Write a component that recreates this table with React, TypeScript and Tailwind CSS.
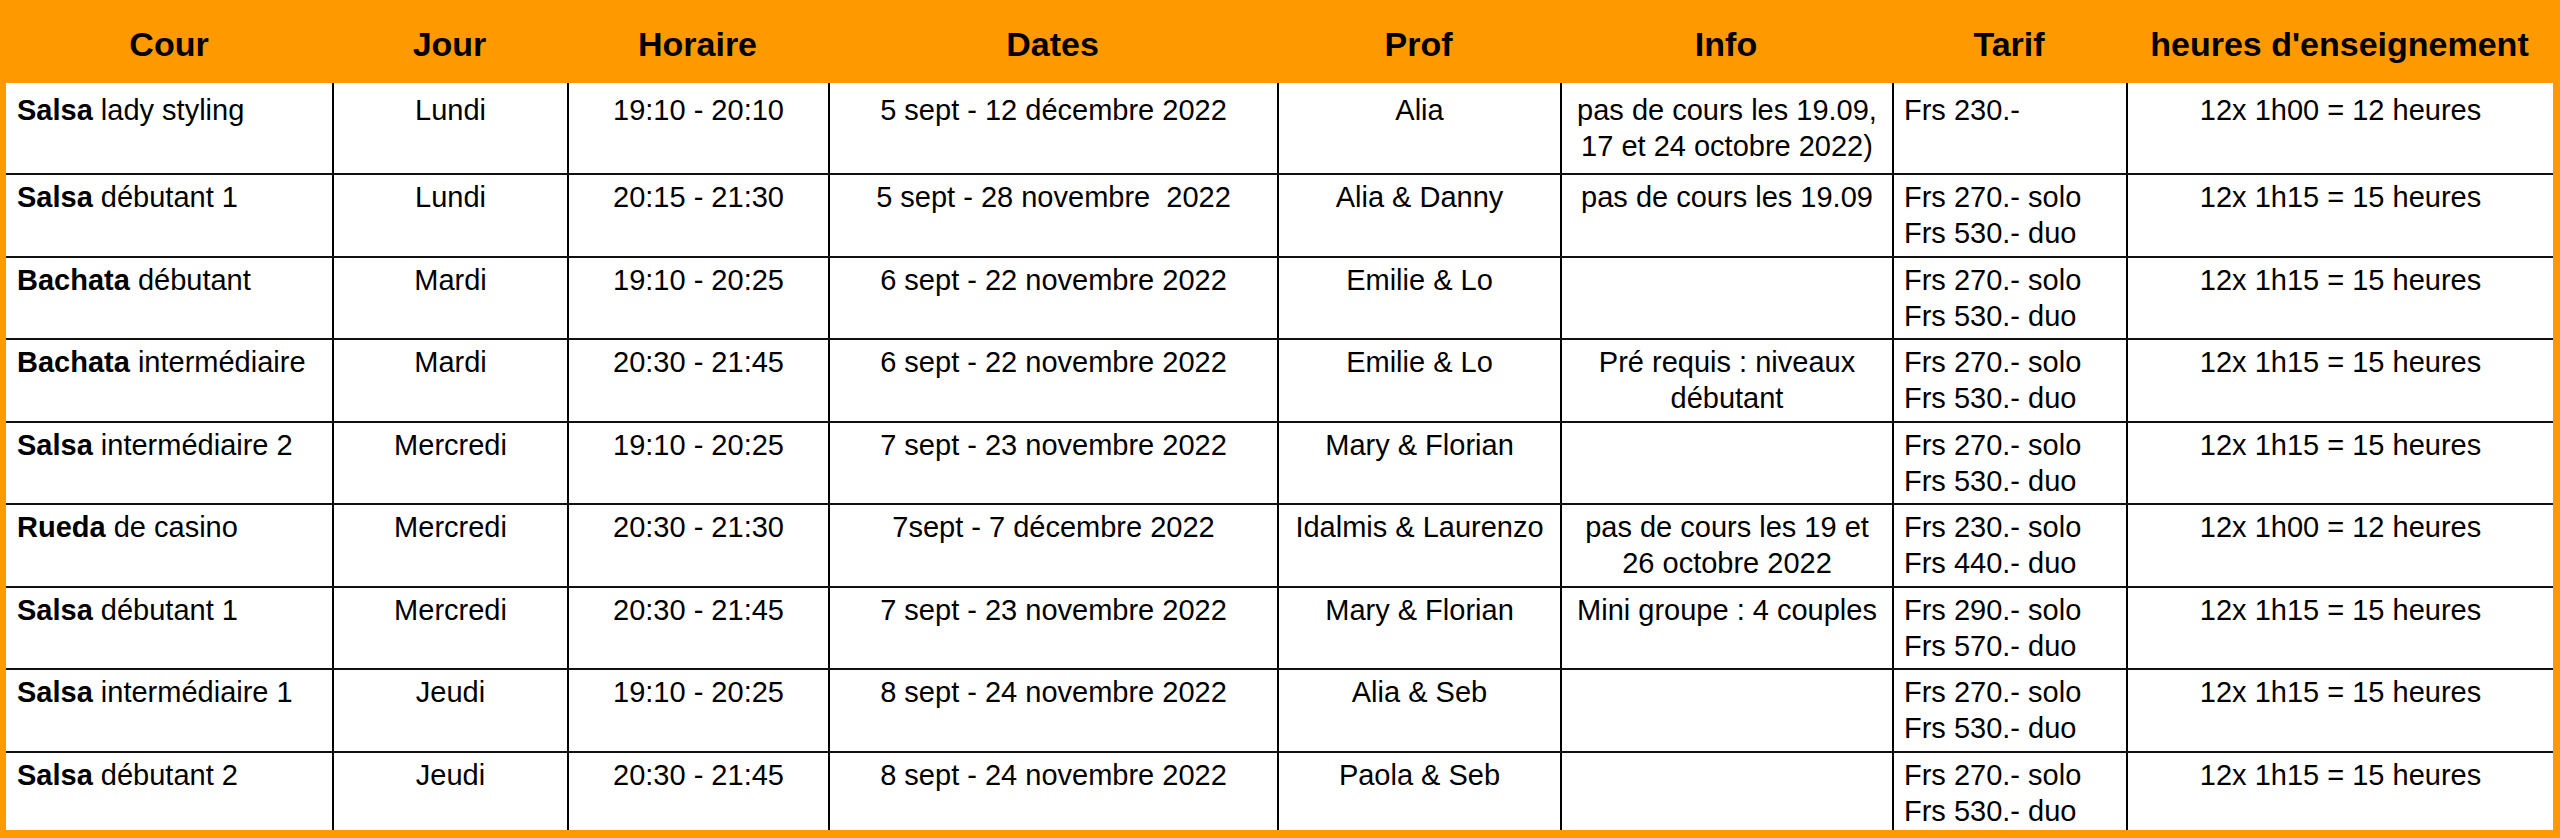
import React from "react";

type Row = {
  style: string;
  rest: string;
  day: string;
  time: string;
  dates: string;
  prof: string;
  info: string[];
  tarif: string[];
  hours: string;
  h: string;
  pt: string;
};

const rows: Row[] = [
  {
    style: "Salsa",
    rest: "lady styling",
    day: "Lundi",
    time: "19:10 - 20:10",
    dates: "5 sept - 12 décembre 2022",
    prof: "Alia",
    info: ["pas de cours les 19.09,", "17 et 24 octobre 2022)"],
    tarif: ["Frs 230.-"],
    hours: "12x 1h00 = 12 heures",
    h: "h-[90px]",
    pt: "pt-[9px]",
  },
  {
    style: "Salsa",
    rest: "débutant 1",
    day: "Lundi",
    time: "20:15 - 21:30",
    dates: "5 sept - 28 novembre\u00a0 2022",
    prof: "Alia & Danny",
    info: ["pas de cours les 19.09"],
    tarif: ["Frs 270.- solo", "Frs 530.- duo"],
    hours: "12x 1h15 = 15 heures",
    h: "h-[83px] border-t-2",
    pt: "pt-[4px]",
  },
  {
    style: "Bachata",
    rest: "débutant",
    day: "Mardi",
    time: "19:10 - 20:25",
    dates: "6 sept - 22 novembre 2022",
    prof: "Emilie & Lo",
    info: [],
    tarif: ["Frs 270.- solo", "Frs 530.- duo"],
    hours: "12x 1h15 = 15 heures",
    h: "h-[82px] border-t-2",
    pt: "pt-[4px]",
  },
  {
    style: "Bachata",
    rest: "intermédiaire",
    day: "Mardi",
    time: "20:30 - 21:45",
    dates: "6 sept - 22 novembre 2022",
    prof: "Emilie & Lo",
    info: ["Pré requis : niveaux", "débutant"],
    tarif: ["Frs 270.- solo", "Frs 530.- duo"],
    hours: "12x 1h15 = 15 heures",
    h: "h-[83px] border-t-2",
    pt: "pt-[4px]",
  },
  {
    style: "Salsa",
    rest: "intermédiaire 2",
    day: "Mercredi",
    time: "19:10 - 20:25",
    dates: "7 sept - 23 novembre 2022",
    prof: "Mary & Florian",
    info: [],
    tarif: ["Frs 270.- solo", "Frs 530.- duo"],
    hours: "12x 1h15 = 15 heures",
    h: "h-[82px] border-t-2",
    pt: "pt-[4px]",
  },
  {
    style: "Rueda",
    rest: "de casino",
    day: "Mercredi",
    time: "20:30 - 21:30",
    dates: "7sept - 7 décembre 2022",
    prof: "Idalmis & Laurenzo",
    info: ["pas de cours les 19 et", "26 octobre 2022"],
    tarif: ["Frs 230.- solo", "Frs 440.- duo"],
    hours: "12x 1h00 = 12 heures",
    h: "h-[83px] border-t-2",
    pt: "pt-[4px]",
  },
  {
    style: "Salsa",
    rest: "débutant 1",
    day: "Mercredi",
    time: "20:30 - 21:45",
    dates: "7 sept - 23 novembre 2022",
    prof: "Mary & Florian",
    info: ["Mini groupe : 4 couples"],
    tarif: ["Frs 290.- solo", "Frs 570.- duo"],
    hours: "12x 1h15 = 15 heures",
    h: "h-[82px] border-t-2",
    pt: "pt-[4px]",
  },
  {
    style: "Salsa",
    rest: "intermédiaire 1",
    day: "Jeudi",
    time: "19:10 - 20:25",
    dates: "8 sept - 24 novembre 2022",
    prof: "Alia & Seb",
    info: [],
    tarif: ["Frs 270.- solo", "Frs 530.- duo"],
    hours: "12x 1h15 = 15 heures",
    h: "h-[83px] border-t-2",
    pt: "pt-[4px]",
  },
  {
    style: "Salsa",
    rest: "débutant 2",
    day: "Jeudi",
    time: "20:30 - 21:45",
    dates: "8 sept - 24 novembre 2022",
    prof: "Paola & Seb",
    info: [],
    tarif: ["Frs 270.- solo", "Frs 530.- duo"],
    hours: "12x 1h15 = 15 heures",
    h: "h-[79px] border-t-2",
    pt: "pt-[4px]",
  },
];

const cols =
  "grid grid-cols-[326px_235px_261px_449px_283px_332px_234px_427px]";

const headers = [
  "Cour",
  "Jour",
  "Horaire",
  "Dates",
  "Prof",
  "Info",
  "Tarif",
  "heures d'enseignement",
];

export default function App() {
  return (
    <div className="w-[2560px] h-[838px] bg-[#ff9900] pl-[6px] pr-[7px] pb-[8px] font-['Liberation_Sans',Arial,sans-serif] text-black">
      {/* header */}
      <div className={`${cols} h-[83px]`}>
        {headers.map((h) => (
          <div
            key={h}
            className="flex items-center justify-center pt-[6px] text-[34px] font-bold whitespace-nowrap"
          >
            {h}
          </div>
        ))}
      </div>

      {/* body */}
      <div className="bg-white text-[29px] leading-[36px]">
        {rows.map((r, i) => (
          <div key={i} className={`${cols} border-[#111] ${r.h}`}>
            <div className={`${r.pt} pl-[11px] whitespace-nowrap`}>
              <span className="font-bold">{r.style}</span> {r.rest}
            </div>
            <div className={`${r.pt} border-l-2 border-black text-center`}>
              {r.day}
            </div>
            <div
              className={`${r.pt} border-l-2 border-black text-center whitespace-nowrap`}
            >
              {r.time}
            </div>
            <div
              className={`${r.pt} border-l-2 border-black text-center whitespace-pre`}
            >
              {r.dates}
            </div>
            <div
              className={`${r.pt} border-l-2 border-black text-center whitespace-nowrap`}
            >
              {r.prof}
            </div>
            <div
              className={`${r.pt} border-l-2 border-black text-center whitespace-nowrap`}
            >
              {r.info.map((l) => (
                <div key={l}>{l}</div>
              ))}
            </div>
            <div
              className={`${r.pt} border-l-2 border-black pl-[10px] whitespace-nowrap`}
            >
              {r.tarif.map((l) => (
                <div key={l}>{l}</div>
              ))}
            </div>
            <div
              className={`${r.pt} border-l-2 border-black text-center whitespace-nowrap`}
            >
              {r.hours}
            </div>
          </div>
        ))}
      </div>
    </div>
  );
}
